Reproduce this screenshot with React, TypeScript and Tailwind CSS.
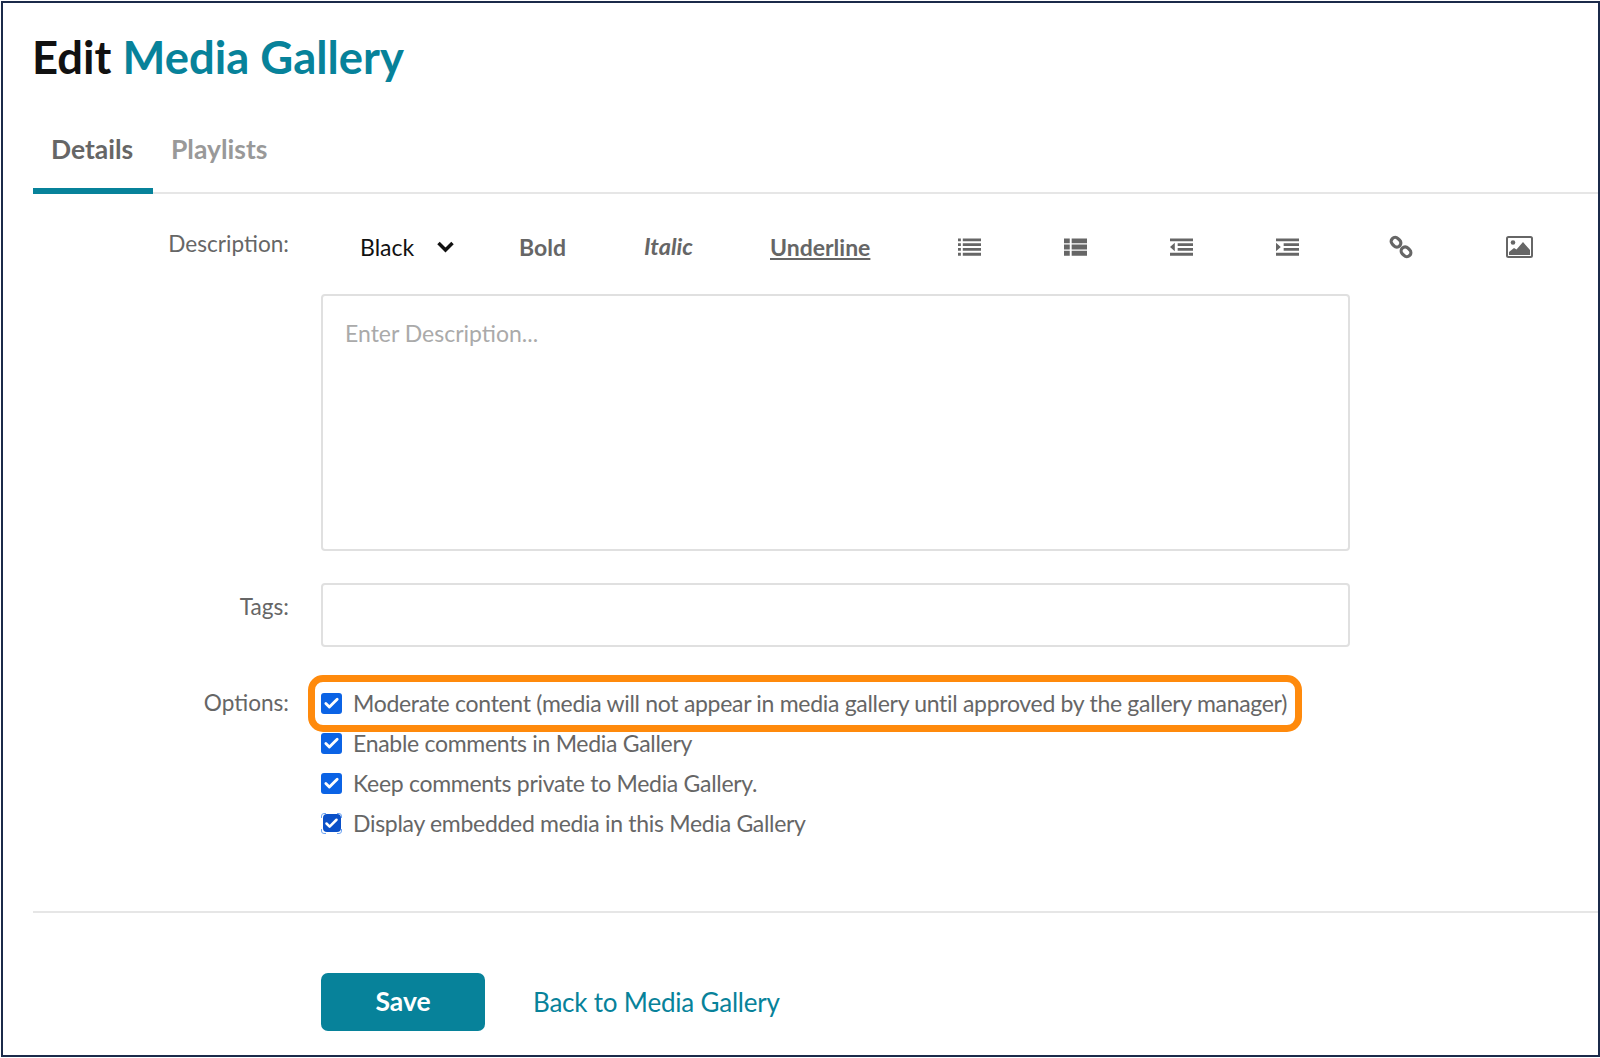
import { Check } from 'lucide-react'

const LATO = 'font-["Lato","Noto_Sans",sans-serif]'

const OPTIONS = [
  'Moderate content (media will not appear in media gallery until approved by the gallery manager)',
  'Enable comments in Media Gallery',
  'Keep comments private to Media Gallery.',
  'Display embedded media in this Media Gallery',
]

function ListIcon() {
  return (
    <svg width="23" height="18" viewBox="0 0 24 18" fill="#666">
      <path d="M0 0h3v3H0zM5 0h19v3H5zM0 5h3v3H0zM5 5h19v3H5zM0 10h3v3H0zM5 10h19v3H5zM0 15h3v3H0zM5 15h19v3H5z" />
    </svg>
  )
}

function BlockListIcon() {
  return (
    <svg width="23" height="18" viewBox="0 0 24 18" fill="#666">
      <path d="M0 0h6v5H0zM8 0h16v5H8zM0 6.500h6v5H0zM8 6.500h16v5H8zM0 13h6v5H0zM8 13h16v5H8z" />
    </svg>
  )
}

function OutdentIcon() {
  return (
    <svg width="23" height="18" viewBox="0 0 24 18" fill="#666">
      <path d="M0 0h24v3H0zM8 5h16v3H8zM8 10h16v3H8zM0 15h24v3H0zM5 4.500v9L0 9z" />
    </svg>
  )
}

function IndentIcon() {
  return (
    <svg width="23" height="18" viewBox="0 0 24 18" fill="#666">
      <path d="M0 0h24v3H0zM8 5h16v3H8zM8 10h16v3H8zM0 15h24v3H0zM0 4.500v9L5 9z" />
    </svg>
  )
}

function LinkIcon() {
  return (
    <svg width="24" height="24" viewBox="0 0 24 24" fill="none" stroke="#666" strokeWidth="3.200">
      <rect x="1.800" y="3.200" width="10.400" height="8" rx="4" transform="rotate(45 7 7.200)" />
      <rect x="11.800" y="12.800" width="10.400" height="8" rx="4" transform="rotate(45 17 16.800)" />
    </svg>
  )
}

function ImageIcon() {
  return (
    <svg width="27" height="22" viewBox="0 0 27 22">
      <rect x="1" y="1" width="25" height="20" rx="1.500" fill="none" stroke="#666" strokeWidth="2" />
      <circle cx="7" cy="6.500" r="2.300" fill="#666" />
      <path d="M3 19v-3l5-4 2.500 1.500L17 6l7 8v5z" fill="#666" />
    </svg>
  )
}

function Checkbox({ focused }: { focused?: boolean }) {
  if (focused) {
    return (
      <span className="relative flex h-[21px] w-[21px] shrink-0 items-center justify-center">
        <svg className="absolute inset-0" width="21" height="21" viewBox="0 0 21 21" fill="none" stroke="#6ea4f2" strokeWidth="1">
          <path d="M.5 5V3A2.500 2.500 0 0 1 3 .5h2M16 .5h2A2.500 2.500 0 0 1 20.500 3v2M20.500 16v2a2.500 2.500 0 0 1-2.500 2.500h-2M5 20.500H3A2.500 2.500 0 0 1 .5 18v-2" />
        </svg>
        <span className="flex h-[18px] w-[18px] items-center justify-center rounded-[4px] bg-[#0a50c8]">
          <Check size={15} strokeWidth={4} color="#fff" />
        </span>
      </span>
    )
  }
  return (
    <span className="flex h-[21px] w-[21px] shrink-0 items-center justify-center rounded-[3px] bg-[#0b63e5]">
      <Check size={17} strokeWidth={4} color="#fff" />
    </span>
  )
}

export default function App() {
  return (
    <div className={`h-[1058px] w-[1600px] overflow-hidden bg-white pl-px pt-px ${LATO}`}>
      <div className="h-[1056px] border-2 border-[#1b2a4a] pl-[30px] pt-[26px]">
        <h1 className="-ml-px text-[45.400px] leading-[56px] font-bold text-[#111]">
          Edit <span className="text-[#07829a]">Media Gallery</span>
        </h1>

        <div className="mt-[29px] flex h-[80px] border-b-2 border-[#e6e6e6]">
          <div className="h-[80px] w-[120px] border-b-[6px] border-[#07829a] pl-[18px] pt-[17px] text-[26.500px] leading-[36px] font-bold text-[#666]">
            Details
          </div>
          <div className="pl-[18px] pt-[17px] text-[26.500px] leading-[36px] font-bold text-[#999]">
            Playlists
          </div>
        </div>

        <div className="mt-[35px] flex">
          <div className="w-[256px] text-right text-[22.600px] leading-[30px] text-[#666]">Description:</div>
          <div className="ml-[32px] flex-1">
            <div className="flex h-[36px] items-center text-[23px] text-[#666]">
              <span className="ml-[39px] w-[77px] text-[#111]">Black</span>
              <svg width="17" height="12" viewBox="0 0 17 12" fill="none" stroke="#111" strokeWidth="3.500">
                <path d="M1.500 2l7 7 7-7" />
              </svg>
              <span className="ml-[65px] w-[125px] font-bold">Bold</span>
              <span className="w-[126px] text-[23.500px] font-bold italic">Italic</span>
              <span className="w-[188px] font-bold underline">Underline</span>
              <span className="w-[106px]"><ListIcon /></span>
              <span className="w-[106px]"><BlockListIcon /></span>
              <span className="w-[106px]"><OutdentIcon /></span>
              <span className="w-[113px]"><IndentIcon /></span>
              <span className="w-[117px]"><LinkIcon /></span>
              <ImageIcon />
            </div>
            <div className="mt-[29px] h-[257px] w-[1029px] rounded-[4px] border-2 border-[#e0e0e0] px-[22px] pt-[23px] text-[23px] leading-[28px] text-[#aaa]">
              Enter Description...
            </div>
          </div>
        </div>

        <div className="mt-[32px] flex">
          <div className="w-[256px] pt-[9px] text-right text-[22.600px] leading-[30px] text-[#666]">Tags:</div>
          <div className="ml-[32px] h-[64px] w-[1029px] rounded-[4px] border-2 border-[#e0e0e0]" />
        </div>

        <div className="relative mt-[36px] flex">
          <div className="w-[256px] text-right text-[22.600px] leading-[40px] text-[#666]">Options:</div>
          <div className="ml-[32px] flex flex-col">
            {OPTIONS.map((label, i) => (
              <div key={label} className="flex h-[40px] items-center gap-[11px] text-[23px] tracking-[-0.3px] text-[#666]">
                <Checkbox focused={i === 3} />
                <span>{label}</span>
              </div>
            ))}
          </div>
          <div className="absolute left-[275px] top-[-8px] h-[57px] w-[994px] rounded-[15px] border-[7px] border-[#ff8a0c]" />
        </div>

        <div className="mt-[68px] border-t-2 border-[#e6e6e6] pl-[288px] pt-[60px]">
          <div className="flex items-center">
            <button className="h-[58px] w-[164px] rounded-[7px] bg-[#07829a] text-[26.500px] font-bold text-white">Save</button>
            <a className="ml-[48px] text-[26px] tracking-[-0.2px] text-[#07829a]">Back to Media Gallery</a>
          </div>
        </div>
      </div>
    </div>
  )
}
